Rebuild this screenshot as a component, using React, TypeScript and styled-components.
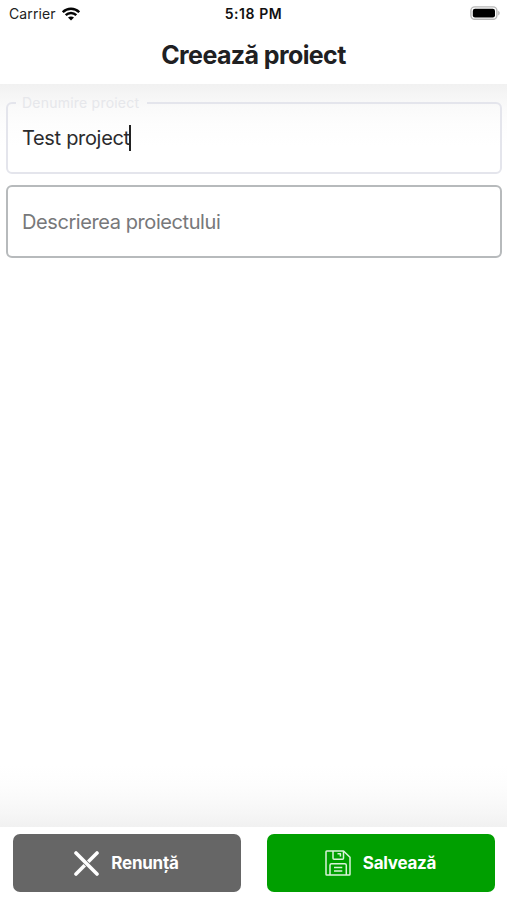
import React from 'react';
import styled, { createGlobalStyle } from 'styled-components';

const GlobalStyle = createGlobalStyle`
  * { box-sizing: border-box; }
  body { margin: 0; background: #fff; }
`;

const Screen = styled.div`
  width: 507px;
  height: 900px;
  display: flex;
  flex-direction: column;
  overflow: hidden;
  background: #fff;
  color: #202022;
  font-family: Inter, 'Liberation Sans', sans-serif;
`;

const StatusBar = styled.div`
  height: 28px;
  flex: none;
  display: grid;
  grid-template-columns: 1fr auto 1fr;
  align-items: center;
  padding: 0 7px 1px 9px;
  font-size: 14px;
  color: #222;
`;

const Carrier = styled.div`
  display: flex;
  align-items: center;
  gap: 6px;
  letter-spacing: 0.12px;
`;

const Clock = styled.div`
  margin-left: -2px;
  font-weight: 600;
  letter-spacing: 0.55px;
  color: #111;
`;

const BatterySlot = styled.div`
  display: flex;
  justify-content: flex-end;
  padding-bottom: 1px;
`;

const Title = styled.h1`
  margin: 0;
  height: 56px;
  flex: none;
  text-align: center;
  font-size: 25px;
  line-height: 54px;
  font-weight: 700;
  letter-spacing: -0.6px;
`;

const Content = styled.main`
  flex: none;
  height: 743px;
  padding: 11px 5px 0 6px;
  display: flex;
  flex-direction: column;
  gap: 11px;
  background:
    linear-gradient(to bottom, #f1f1f1 0, #f5f5f5 10px, #fafafa 24px, #fdfdfd 40px, rgba(255, 255, 255, 0) 62px),
    linear-gradient(to top, #f1f1f1 0, #f6f6f6 14px, #fafafa 28px, #fdfdfd 42px, #fff 62px);
`;

const Field = styled.fieldset<{ $active?: boolean }>`
  margin: 0;
  min-width: 0;
  height: ${p => (p.$active ? 79 : 73)}px;
  padding: 0 14px;
  border: 2px solid ${p => (p.$active ? '#e4e5ec' : '#b7babc')};
  border-radius: 6px;
  font-size: 20px;
  letter-spacing: ${p => (p.$active ? -0.32 : -0.42)}px;
  color: ${p => (p.$active ? '#2b2b2d' : '#77787a')};
`;

const Value = styled.div<{ $height: number }>`
  height: ${p => p.$height}px;
  display: flex;
  align-items: center;
`;

const Legend = styled.legend`
  margin-left: -6px;
  padding: 0 8px 0 6px;
  height: 16px;
  line-height: 16px;
  font-size: 14px;
  font-weight: 400;
  letter-spacing: 0.22px;
  color: #e6e7eb;
`;

const Caret = styled.span`
  width: 2px;
  height: 26px;
  margin-left: -1px;
  background: #222;
`;

const Footer = styled.footer`
  flex: none;
  height: 73px;
  padding: 7px 12px 8px 13px;
  display: grid;
  grid-template-columns: 1fr 1fr;
  gap: 26px;
  background: #fff;
`;

const Button = styled.button<{ $tone: string }>`
  border: 0;
  border-radius: 7px;
  padding: 0 1px 0 0;
  display: flex;
  align-items: center;
  justify-content: center;
  gap: 12px;
  background: ${p => p.$tone};
  color: #fff;
  font: 700 17px Inter, 'Liberation Sans', sans-serif;
  letter-spacing: -0.25px;
`;

const WifiIcon = () => (
  <svg width="18" height="14" viewBox="0 0 18 14" fill="none" stroke="#050505" strokeWidth="2.4">
    <path d="M.8 5.2C5.4.6 12.6.6 17.2 5.2" />
    <path d="M3.7 8.2C6.7 5.2 11.3 5.2 14.3 8.2" />
    <path d="M9 13.6 6 10.5C7.8 9 10.2 9 12 10.5Z" fill="#050505" stroke="none" />
  </svg>
);

const BatteryIcon = () => (
  <svg width="30" height="14" viewBox="0 0 30 14">
    <rect x=".9" y=".9" width="26" height="12.4" rx="3.8" fill="#fff" stroke="#b8b8b8" strokeWidth="1.4" />
    <rect x="2.8" y="2.8" width="22.2" height="8.6" rx="2.2" fill="#000" />
    <path d="M28.2 4.7c2 .8 2 4 0 4.8Z" fill="#b8b8b8" />
  </svg>
);

const CrossIcon = () => (
  <svg width="25" height="25" viewBox="0 0 25 25" fill="none" strokeLinecap="round">
    <path d="M2 23 23 2" stroke="#fff" strokeWidth="3.6" />
    <path d="M9 9l7 7" stroke="#666" strokeWidth="5" strokeLinecap="butt" />
    <path d="M2 2 23 23" stroke="#fff" strokeWidth="3.6" />
  </svg>
);

const SaveIcon = () => (
  <svg width="26" height="26" viewBox="0 0 26 26" fill="none" stroke="#d9f3d9" strokeWidth="1.5" strokeLinejoin="round">
    <path d="M1.8 1H18.5L25 7.3V24.2a.8.8 0 0 1-.8.8H1.8a.8.8 0 0 1-.8-.8V1.8A.8.8 0 0 1 1.8 1Z" />
    <path d="M8 1V8.2a1 1 0 0 0 1 1H17.5a1 1 0 0 0 1-1V1M12.5 3.8H15.4V6.4" />
    <path d="M5 25V15.2a1.5 1.5 0 0 1 1.5-1.5H19.8a1.5 1.5 0 0 1 1.5 1.5V25M9 17.4H17.3M9 21H17.3" />
  </svg>
);

export default function App() {
  return (
    <>
      <GlobalStyle />
      <Screen>
        <StatusBar>
          <Carrier>Carrier <WifiIcon /></Carrier>
          <Clock>5:18 PM</Clock>
          <BatterySlot><BatteryIcon /></BatterySlot>
        </StatusBar>
        <Title>Creează proiect</Title>
        <Content>
          <Field $active>
            <Legend>Denumire proiect</Legend>
            <Value $height={54}>Test project<Caret /></Value>
          </Field>
          <Field><Value $height={69}>Descrierea proiectului</Value></Field>
        </Content>
        <Footer>
          <Button $tone="#666666"><CrossIcon />Renunță</Button>
          <Button $tone="#009f00"><SaveIcon />Salvează</Button>
        </Footer>
      </Screen>
    </>
  );
}
